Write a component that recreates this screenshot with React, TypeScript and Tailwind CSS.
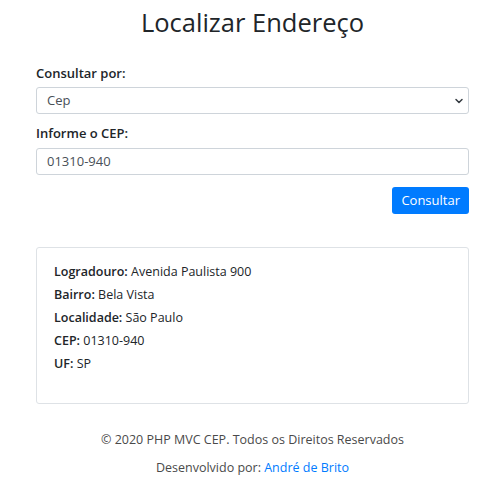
import { ChevronDown } from "lucide-react";

const address = [
  { label: "Logradouro:", value: "Avenida Paulista 900" },
  { label: "Bairro:", value: "Bela Vista" },
  { label: "Localidade:", value: "São Paulo" },
  { label: "CEP:", value: "01310-940" },
  { label: "UF:", value: "SP" },
];

export default function App() {
  return (
    <div className="min-h-[500px] bg-white text-[#212529] font-['Open_Sans',sans-serif]">
      <div className="pl-[36px] pr-[31px] pt-[7px]">
        <h1 className="text-center text-[25.5px] leading-[30px] font-normal text-[#212529] mb-[27px]">
          Localizar Endereço
        </h1>

        {/* Form */}
        <div>
          <label className="block text-[13px] leading-[18px] font-semibold mb-[5px]">Consultar por:</label>
          <div className="relative h-[27px] border border-[#ced4da] rounded-[3px] flex items-center px-[10px] text-[13px] text-[#495057]">
            Cep
            <ChevronDown className="absolute right-[3px] top-[7px] w-[12px] h-[12px] text-[#343a40]" strokeWidth={3} />
          </div>

          <label className="block text-[13px] leading-[18px] font-semibold mt-[10px] mb-[6px]">Informe o CEP:</label>
          <div className="h-[27px] border border-[#ced4da] rounded-[3px] flex items-center px-[10px] text-[13px] text-[#495057]">
            01310-940
          </div>

          <div className="flex justify-end mt-[12px]">
            <button className="h-[27px] px-[9px] bg-[#007bff] text-white text-[13px] rounded-[3px]">Consultar</button>
          </div>
        </div>

        {/* Resultado */}
        <div className="mt-[33px] h-[157px] border border-[#dee2e6] rounded-[3px] px-[17px] pt-[12px]">
          {address.map((row) => (
            <p key={row.label} className="text-[12.5px] leading-[23px]">
              <span className="font-semibold">{row.label}</span> {row.value}
            </p>
          ))}
        </div>

        {/* Footer */}
        <div className="text-center text-[12.5px] text-[#4a4a4a] mt-[27px] leading-[18px]">
          <p>© 2020 PHP MVC CEP. Todos os Direitos Reservados</p>
          <p className="mt-[10px]">
            Desenvolvido por: <a className="text-[#007bff]">André de Brito</a>
          </p>
        </div>
      </div>
    </div>
  );
}
